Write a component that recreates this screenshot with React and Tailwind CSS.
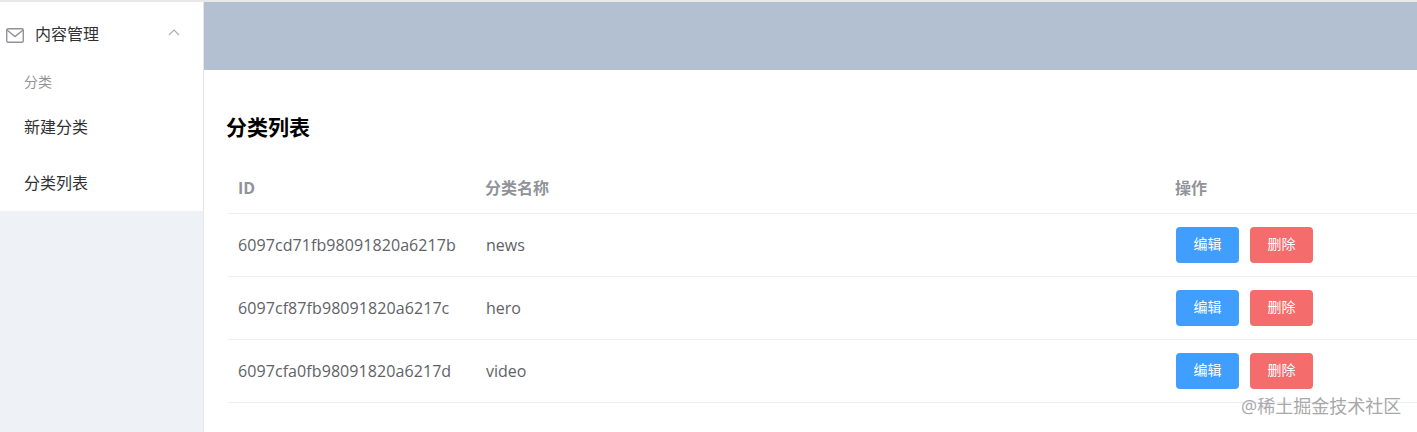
const font = { fontFamily: '"Open Sans", "Noto Sans CJK SC", sans-serif' };

const rows = [
  ["6097cd71fb98091820a6217b", "news"],
  ["6097cf87fb98091820a6217c", "hero"],
  ["6097cfa0fb98091820a6217d", "video"],
];

function Row({ id, name }) {
  return (
    <div className="flex h-[63px] items-center border-b border-[#ebeef5] text-[16px] text-[#606266]">
      <div className="w-[247px] pl-[10px] tracking-[0.08px]">{id}</div>
      <div className="w-[690px] pl-[11px]">{name}</div>
      <div className="flex gap-[11px] pl-[11px]">
        <button className="flex h-[36px] w-[63px] items-center justify-center rounded-[4px] bg-[#409eff] pb-[4px] text-[14px] text-white">编辑</button>
        <button className="flex h-[36px] w-[63px] items-center justify-center rounded-[4px] bg-[#f56c6c] pb-[4px] text-[14px] text-white">删除</button>
      </div>
    </div>
  );
}

export default function App() {
  return (
    <div className="relative flex h-[432px] w-[1417px] overflow-hidden border-t-2 border-[#e8e8e8] bg-white" style={font}>
      <aside className="flex w-[204px] shrink-0 flex-col border-r border-[#e6e6e6] bg-[#eef1f6]">
        <div className="flex h-[209px] flex-col bg-white">
          <div className="flex h-[64px] items-center pl-[6px] text-[16px] text-[#303133]">
            <svg width="18" height="15" viewBox="0 0 18 15" fill="none" stroke="#909399" strokeWidth="1.4" className="mr-[11px] mt-[2px]">
              <rect x="0.7" y="0.7" width="16.6" height="13.6" rx="1.5" />
              <path d="M1 2l8 6.5L17 2" />
            </svg>
            <span>内容管理</span>
            <svg width="12" height="7" viewBox="0 0 12 7" fill="none" stroke="#a8abb2" strokeWidth="1.1" className="ml-[69px] mb-[4px]">
              <path d="M1 6l5-5 5 5" />
            </svg>
          </div>
          <div className="flex h-[30px] items-center pl-[24px] text-[14px] text-[#909399]">分类</div>
          <div className="flex h-[60px] items-center pl-[24px] pt-[2px] text-[16px] text-[#303133]">新建分类</div>
          <div className="flex h-[55px] items-center pb-[2px] pl-[24px] text-[16px] text-[#303133]">分类列表</div>
        </div>
      </aside>
      <main className="flex min-w-0 flex-1 flex-col">
        <div className="h-[68px] bg-[#b3c0d1]" />
        <div className="pl-[22px]">
          <h3 className="mt-[40px] h-[34px] text-[21px] leading-[34px] font-bold text-black">分类列表</h3>
          <div className="ml-[2px] mt-[19px] flex h-[51px] items-center border-b border-[#ebeef5] text-[16px] font-bold text-[#909399]">
            <div className="w-[247px] pl-[10px]">ID</div>
            <div className="w-[690px] pl-[10px]">分类名称</div>
            <div className="pl-[10px]">操作</div>
          </div>
          <div className="ml-[2px]">
            {rows.map(([id, name]) => (
              <Row key={id} id={id} name={name} />
            ))}
          </div>
        </div>
      </main>
      <div className="absolute left-[1241px] top-[391px] text-[18px] leading-[26px] text-[#a8a8a8]">@稀土掘金技术社区</div>
    </div>
  );
}
